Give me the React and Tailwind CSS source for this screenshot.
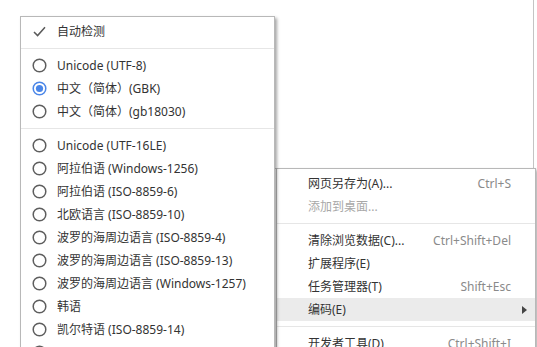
const MAIN_ITEMS = [
  { label: "网页另存为(A)...", shortcut: "Ctrl+S" },
  { label: "添加到桌面...", disabled: true },
  { sep: true },
  { label: "清除浏览数据(C)...", shortcut: "Ctrl+Shift+Del" },
  { label: "扩展程序(E)" },
  { label: "任务管理器(T)", shortcut: "Shift+Esc" },
  { label: "编码(E)", active: true, arrow: true },
  { sep: true },
  { label: "开发者工具(D)", shortcut: "Ctrl+Shift+I" },
];

const ENCODINGS = [
  { check: true, label: "自动检测" },
  { sep: true },
  { label: "Unicode (UTF-8)" },
  { label: "中文（简体）(GBK)", selected: true },
  { label: "中文（简体）(gb18030)" },
  { sep: true },
  { label: "Unicode (UTF-16LE)" },
  { label: "阿拉伯语 (Windows-1256)" },
  { label: "阿拉伯语 (ISO-8859-6)" },
  { label: "北欧语言 (ISO-8859-10)" },
  { label: "波罗的海周边语言 (ISO-8859-4)" },
  { label: "波罗的海周边语言 (ISO-8859-13)" },
  { label: "波罗的海周边语言 (Windows-1257)" },
  { label: "韩语" },
  { label: "凯尔特语 (ISO-8859-14)" },
  { label: "" },
];

function Radio({ selected }) {
  return (
    <svg width="15" height="15" viewBox="0 0 15 15">
      <circle
        cx="7.5"
        cy="7.5"
        r="6.3"
        fill="white"
        stroke={selected ? "#4a86e8" : "#5e5e5e"}
        strokeWidth="1.5"
      />
      {selected && <circle cx="7.5" cy="7.5" r="3.6" fill="#4a86e8" />}
    </svg>
  );
}

function Check() {
  return (
    <svg width="13" height="11" viewBox="0 0 13 11">
      <polyline
        points="1,6 4.6,9.6 12,1.2"
        fill="none"
        stroke="#5a5a5a"
        strokeWidth="1.5"
      />
    </svg>
  );
}

export default function App() {
  return (
    <div className="relative w-[537px] h-[347px] overflow-hidden bg-white font-['Noto_Sans','Noto_Sans_CJK_SC',sans-serif] text-[12px] text-[#333]">
      {/* panel behind, only its right and bottom edges show */}
      <div className="absolute left-[100px] top-0 w-[434px] h-[169px] border-r border-b border-[#c4c4c4] bg-white" />

      {/* main menu */}
      <div className="absolute left-[276px] top-[168px] w-[260px] h-[200px] border border-[#b8b8b8] bg-white pt-[3px] shadow-[2px_2px_3px_rgba(0,0,0,0.3)]">
        {MAIN_ITEMS.map((item, i) =>
          item.sep ? (
            <div key={i} className="py-[5px]">
              <div className="h-px bg-[#e6e6e6]" />
            </div>
          ) : (
            <div
              key={i}
              className={`relative flex items-center h-[23px] pl-[31px] pr-[24px] ${
                item.active ? "bg-[#ebebeb]" : ""
              }`}
            >
              <span className={`flex-1 ${item.disabled ? "text-[#a8a8a8]" : ""}`}>
                {item.label}
              </span>
              {item.shortcut && <span className="text-[#8a8a8a]">{item.shortcut}</span>}
              {item.arrow && (
                <svg className="absolute right-[8px] top-[8px]" width="5" height="8" viewBox="0 0 5 8">
                  <polygon points="0,0 5,4 0,8" fill="#444" />
                </svg>
              )}
            </div>
          )
        )}
      </div>

      {/* encoding submenu */}
      <div className="absolute left-[20px] top-[16px] w-[255px] h-[360px] border border-[#b8b8b8] bg-white pt-[3px] shadow-[2px_2px_3px_rgba(0,0,0,0.35)]">
        {ENCODINGS.map((item, i) =>
          item.sep ? (
            <div key={i} className="py-[5px]">
              <div className="h-px bg-[#e6e6e6]" />
            </div>
          ) : (
            <div key={i} className="flex items-center h-[23px]">
              <div className="w-[36px] flex justify-center pl-[1px]">
                {item.check ? <Check /> : <Radio selected={item.selected} />}
              </div>
              <span>{item.label}</span>
            </div>
          )
        )}
      </div>
    </div>
  );
}
